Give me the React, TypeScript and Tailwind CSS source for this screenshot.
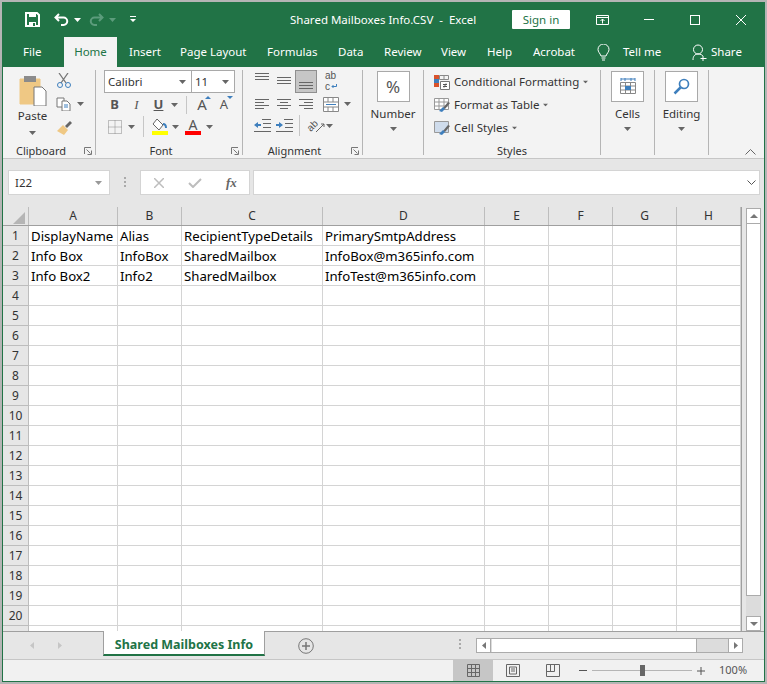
import React from 'react';

const FONT = "font-['Noto_Sans','Open_Sans',sans-serif]";

const colWidths = [89, 64, 141, 162, 64, 64, 64, 64];
const colNames = ['A', 'B', 'C', 'D', 'E', 'F', 'G', 'H'];

const rows: Record<number, string[]> = {
  1: ['DisplayName', 'Alias', 'RecipientTypeDetails', 'PrimarySmtpAddress'],
  2: ['Info Box', 'InfoBox', 'SharedMailbox', 'InfoBox@m365info.com'],
  3: ['Info Box2', 'Info2', 'SharedMailbox', 'InfoTest@m365info.com'],
};

const Caret = ({ className = '' }: { className?: string }) => (
  <svg width="7" height="4" viewBox="0 0 7 4" className={className}>
    <path d="M0 0h7L3.5 4z" fill="#666" />
  </svg>
);

const Launcher = () => (
  <svg width="8" height="8" viewBox="0 0 8 8" className="absolute right-[3px] bottom-0">
    <path d="M.5 7V.5H7M2.5 2.5l4 4M7.5 3.5v4h-4" fill="none" stroke="#777" />
  </svg>
);

const Group = ({ w, label, launcher, children }: { w: string; label?: string; launcher?: boolean; children: React.ReactNode }) => (
  <div className={`relative flex flex-col h-[85px] border-r border-[#b5b5b5] ${w}`}>
    <div className="flex-1 min-h-0">{children}</div>
    {label && (
      <div className={`-mb-[4px] h-[16px] text-center text-[11px] leading-[16px] text-[#333] ${launcher ? 'pr-[16px]' : ''}`}>
        {label}
      </div>
    )}
    {launcher && <Launcher />}
  </div>
);

const Lines = () => (
  <svg width="16" height="9" viewBox="0 0 16 9">
    <rect x="1" y="0" width="14" height="1" fill="#666" />
    <rect x="1" y="3" width="14" height="1" fill="#666" />
    <rect x="1" y="6" width="14" height="1" fill="#666" />
  </svg>
);

const AlignLines = ({ kind }: { kind: 'left' | 'center' | 'right' }) => {
  const xs = kind === 'left' ? [[1, 14], [1, 9], [1, 14], [1, 9]] : kind === 'center' ? [[1, 14], [4, 8], [1, 14], [4, 8]] : [[1, 14], [6, 9], [1, 14], [6, 9]];
  return (
    <svg width="16" height="11" viewBox="0 0 16 11">
      {xs.map(([x, w], i) => <rect key={i} x={x} y={i * 3} width={w} height="1" fill="#666" />)}
    </svg>
  );
};

const TitleBar = () => (
  <div className="flex h-[35px] items-center text-white">
    <svg width="15" height="15" viewBox="0 0 15 15" className="ml-[22px]">
      <path d="M1 1h11l2 2v11H1z" fill="none" stroke="#fff" strokeWidth="2" />
      <path d="M4 1h7v4H4zM4 10h7v4H4z" fill="#fff" />
      <rect x="8" y="11" width="2" height="3" fill="#217346" />
    </svg>
    <svg width="15" height="13" viewBox="0 0 15 13" className="ml-[14px]">
      <path d="M5 1L1.5 4.500 5 8M2 4.500h7.500a3.500 3.500 0 010 7.500H7" fill="none" stroke="#fff" strokeWidth="2" />
    </svg>
    <Caret className="ml-[5px] [&_path]:fill-white" />
    <svg width="15" height="13" viewBox="0 0 15 13" className="ml-[8px]">
      <path d="M10 1l3.500 3.500L10 8M13 4.500H5.500a3.500 3.500 0 000 7.500H8" fill="none" stroke="#5c9c7c" strokeWidth="2" />
    </svg>
    <Caret className="ml-[5px] [&_path]:fill-[#5c9c7c]" />
    <svg width="6" height="7" viewBox="0 0 6 7" className="ml-[14px]">
      <path d="M0 0h6v1H0zM0 3h6L3 6z" fill="#fff" />
    </svg>
    <div className="ml-[154px] w-[186px] whitespace-pre text-[11.5px]">Shared Mailboxes Info.CSV  -  Excel</div>
    <div className="ml-[36px] flex h-[19px] w-[58px] items-center justify-center rounded-[1px] bg-white text-[11.5px] text-[#217346]">Sign in</div>
    <svg width="13" height="10" viewBox="0 0 13 10" className="ml-[26px]">
      <path d="M.5.5h12v9H.5zM.5 2.500h12M6.500 8.500V4M4.500 6l2-2 2 2" fill="none" stroke="#fff" />
    </svg>
    <div className="ml-[35px] h-px w-[10px] bg-white" />
    <div className="ml-[36px] h-[10px] w-[10px] border border-white" />
    <svg width="10" height="10" viewBox="0 0 10 10" className="ml-[36px]">
      <path d="M0 0l10 10M10 0L0 10" stroke="#fff" />
    </svg>
  </div>
);

const tabs: [string, string][] = [
  ['Insert', 'ml-[12px] w-[29px]'],
  ['Page Layout', 'ml-[22px] w-[65px]'],
  ['Formulas', 'ml-[22px] w-[49px]'],
  ['Data', 'ml-[22px] w-[24px]'],
  ['Review', 'ml-[22px] w-[36px]'],
  ['View', 'ml-[21px] w-[25px]'],
  ['Help', 'ml-[21px] w-[24px]'],
  ['Acrobat', 'ml-[22px] w-[42px]'],
];

const TabsRow = () => (
  <div className="flex h-[30px] items-center whitespace-nowrap text-[11.5px] text-white">
    <span className="ml-[20px] w-[41px]">File</span>
    <div className="flex h-full w-[53px] items-center justify-center bg-[#f3f3f3] text-[#217346]">Home</div>
    {tabs.map(([t, m]) => <span key={t} className={m}>{t}</span>)}
    <svg width="13" height="17" viewBox="0 0 13 17" className="ml-[22px]">
      <path d="M4 12C3 9 1 8 1 5.500a5.500 5.500 0 0111 0C12 8 10 9 9 12zM4.500 14h4M5 16h3" fill="none" stroke="#fff" />
    </svg>
    <span className="ml-[13px] w-[38px]">Tell me</span>
    <svg width="15" height="17" viewBox="0 0 15 17" className="ml-[31px]">
      <path d="M1 16c0-4 2-6 5-6s4 1 5 2M6 10a4 4 0 100-9 4 4 0 000 9zM11 12v5M8.500 14.500h6" fill="none" stroke="#fff" />
    </svg>
    <span className="ml-[4px]">Share</span>
  </div>
);

const BigButton = ({ label, children }: { label: string; children: React.ReactNode }) => (
  <div className="flex w-full flex-col items-center pt-[1px]">
    <div className="flex h-[31px] w-[33px] items-center justify-center border border-[#a9a9a9] bg-white">{children}</div>
    <div className="mt-[3px] text-[11.5px] leading-[17px] text-[#333]">{label}</div>
    <Caret className="mt-[5px]" />
  </div>
);

const Clipboard = () => (
  <Group w="w-[93px]" label="Clipboard" launcher>
    <div className="flex">
      <div className="ml-[14px] flex w-[31px] flex-col items-center pt-[5px]">
        <svg width="28" height="31" viewBox="0 0 28 31">
          <path d="M1 4h20v25H1z" fill="#efc884" stroke="#efc884" />
          <rect x="5" y="1" width="12" height="6" fill="#8b8b8b" />
          <path d="M15 12h8l4 4v15H15z" fill="#fff" stroke="#777" />
        </svg>
        <div className="mt-[2px] text-[11.5px] leading-[16px] text-[#333]">Paste</div>
        <Caret className="mt-[7px]" />
      </div>
      <div className="ml-[8px] flex flex-col pt-[3px]">
        <svg width="16" height="15" viewBox="0 0 16 15">
          <path d="M3 0l7 10M12 0L5 10" stroke="#777" fill="none" strokeWidth="1.300" />
          <circle cx="4" cy="12" r="2.500" fill="none" stroke="#3e7fbd" />
          <circle cx="12" cy="12" r="2.500" fill="none" stroke="#3e7fbd" />
        </svg>
        <div className="mt-[9px] flex items-center">
          <svg width="16" height="14" viewBox="0 0 16 14">
            <path d="M1 1h7v9H1z" fill="#fff" stroke="#777" />
            <path d="M6 4h5l3 3v7H6z" fill="#fff" stroke="#777" />
            <path d="M8 8h4M8 10h4" stroke="#3e7fbd" />
          </svg>
          <Caret className="ml-[5px]" />
        </div>
        <svg width="17" height="16" viewBox="0 0 17 16" className="mt-[9px]">
          <path d="M1 11l6-6 5 5-4 5z" fill="#efc884" />
          <path d="M9 6l5-5 2 2-5 5z" fill="#666" />
        </svg>
      </div>
    </div>
  </Group>
);

const FontA = ({ up }: { up: boolean }) => (
  <div className="relative flex w-[18px] justify-center">
    <span className={`${up ? 'text-[15px]' : 'text-[13px]'} leading-[17px] text-[#555]`}>A</span>
    <svg width="6" height="3" viewBox="0 0 6 3" className="absolute right-0 top-0">
      <path d={up ? 'M0 3h6L3 0z' : 'M0 0h6L3 3z'} fill="#3e7fbd" />
    </svg>
  </div>
);

const FontGroup = () => (
  <Group w="w-[147px]" label="Font" launcher>
    <div className="pl-[8px]">
      <div className="flex h-[23px]">
        <div className="flex w-[88px] items-center justify-between border border-[#a9a9a9] bg-white pl-[3px] pr-[5px] text-[11.5px] text-[#333]">
          <span>Calibri</span>
          <Caret />
        </div>
        <div className="flex w-[43px] items-center justify-between border border-l-0 border-[#a9a9a9] bg-white pl-[3px] pr-[5px] text-[11.5px] text-[#333]">
          <span>11</span>
          <Caret />
        </div>
      </div>
      <div className="mt-[1px] flex h-[21px] items-center text-[13px] text-[#555]">
        <span className="ml-[1px] w-[19px] text-center font-bold">B</span>
        <span className="ml-[3px] w-[19px] text-center font-['Liberation_Serif',serif] italic">I</span>
        <span className="ml-[3px] w-[19px] text-center font-bold underline">U</span>
        <Caret className="ml-[3px]" />
        <div className="ml-[8px] h-[18px] w-px bg-[#c6c6c6]" />
        <div className="ml-[6px]"><FontA up /></div>
        <div className="ml-[4px]"><FontA up={false} /></div>
      </div>
      <div className="mt-[1px] flex h-[21px] items-center">
        <svg width="14" height="14" viewBox="0 0 14 14" className="ml-[4px]">
          <path d="M.5.5h13v13H.5zM7 .5v13M.5 7h13" fill="none" stroke="#888" strokeDasharray="1 1" />
        </svg>
        <Caret className="ml-[6px]" />
        <div className="ml-[8px] h-[21px] w-px bg-[#c6c6c6]" />
        <div className="ml-[7px] flex w-[17px] flex-col items-center">
          <svg width="15" height="13" viewBox="0 0 15 13">
            <path d="M5 1l6 6-4 5-6-6z" fill="#fff" stroke="#666" />
            <path d="M11 6c2 0 3 1 3 4" fill="none" stroke="#3e7fbd" strokeWidth="2" />
          </svg>
          <div className="h-[4px] w-[16px] bg-[#ffff00]" />
        </div>
        <Caret className="ml-[4px]" />
        <div className="ml-[6px] flex w-[16px] flex-col items-center">
          <span className="h-[13px] text-[14px] leading-[13px] text-[#555]">A</span>
          <div className="h-[4px] w-[16px] bg-[#ff0000]" />
        </div>
        <Caret className="ml-[5px]" />
      </div>
    </div>
  </Group>
);

const AlignmentGroup = () => (
  <Group w="w-[120px]" label="Alignment" launcher>
    <div className="pl-[11px]">
      <div className="flex h-[23px]">
        <div className="pt-[3px]"><Lines /></div>
        <div className="ml-[6px] pt-[7px]"><Lines /></div>
        <div className="ml-[3px] flex w-[22px] items-end justify-center border border-[#8f8f8f] bg-[#c6c6c6] pb-[1px]"><Lines /></div>
        <div className="ml-[8px] flex flex-col font-['Liberation_Sans',sans-serif] text-[10px] leading-[11px] text-[#555]">
          <span>ab</span>
          <div className="flex items-center">
            <span>c</span>
            <svg width="6" height="5" viewBox="0 0 6 5" className="ml-[1px]">
              <path d="M5.500 0v2.500H1M2.500 1L1 2.500 2.500 4" fill="none" stroke="#3e7fbd" />
            </svg>
          </div>
        </div>
      </div>
      <div className="mt-[3px] flex h-[16px] items-center">
        <AlignLines kind="left" />
        <div className="ml-[6px]"><AlignLines kind="center" /></div>
        <div className="ml-[6px]"><AlignLines kind="right" /></div>
        <svg width="16" height="15" viewBox="0 0 16 15" className="ml-[9px]">
          <path d="M.5.5h15v14H.5zM.5 5h15M.5 10h15M5 .5V5M10 .5V5M5 10v4.500M10 10v4.500" fill="#fff" stroke="#888" />
          <path d="M3 7.500h10" stroke="#3e7fbd" />
        </svg>
        <Caret className="ml-[5px]" />
      </div>
      <div className="mt-[3px] flex h-[21px] items-center">
        <svg width="17" height="13" viewBox="0 0 17 13">
          <path d="M8 .5h9M9 4.500h8M9 8.500h8M0 12.500h17" stroke="#666" />
          <path d="M0 6l4-3v2h3v2H4v2z" fill="#3e7fbd" />
        </svg>
        <svg width="17" height="13" viewBox="0 0 17 13" className="ml-[5px]">
          <path d="M8 .5h9M9 4.500h8M9 8.500h8M0 12.500h17" stroke="#666" />
          <path d="M7 6L3 3v2H0v2h3v2z" fill="#3e7fbd" />
        </svg>
        <div className="ml-[6px] h-[21px] w-px bg-[#c6c6c6]" />
        <div className="relative ml-[7px] flex h-[16px] w-[18px] items-center">
          <span className="-rotate-45 font-['Liberation_Sans',sans-serif] text-[10px] leading-[10px] text-[#555]">ab</span>
          <svg width="18" height="16" viewBox="0 0 18 16" className="absolute inset-0">
            <path d="M9 14l8-8M14 6h3v3" fill="none" stroke="#666" />
          </svg>
        </div>
        <Caret className="ml-[1px]" />
      </div>
    </div>
  </Group>
);

const StyleRow = ({ label, kind }: { label: string; kind: 'cond' | 'table' | 'cell' }) => (
  <div className="flex h-[23px] items-center whitespace-nowrap">
    {kind === 'cond' ? (
      <svg width="16" height="16" viewBox="0 0 16 16">
        <path d="M0 1h5v4H0z" fill="#d9532c" />
        <path d="M0 5h5v4H0z" fill="#3e7fbd" />
        <path d="M0 9h5v4H0z" fill="#d9532c" />
        <path d="M5.500 1.500h9v4h-9zM10 1.500v4" fill="none" stroke="#888" />
        <path d="M6.500 7.500h9v8h-9z" fill="#fff" stroke="#777" />
        <path d="M9 10.500h4M9 12.500h4M12 9.500l-2 4" stroke="#555" fill="none" />
      </svg>
    ) : (
      <svg width="16" height="16" viewBox="0 0 16 16">
        <path d={kind === 'table' ? 'M.5 1.500h14v11H.5zM.5 5h14M.5 9h14M5 1.500v11M10 1.500v11' : 'M.5 1.500h14v11H.5z'} fill={kind === 'table' ? '#fff' : '#cfdcec'} stroke="#999" />
        <path d="M9 11l5-6 2 1-5 6z" fill="#666" />
        <path d="M5 14l4-4 2 2-3 3z" fill="#3e7fbd" />
      </svg>
    )}
    <span className="ml-[4px] text-[11.5px] text-[#333]">{label}</span>
    <Caret className="ml-[3px] scale-75" />
  </div>
);

const Ribbon = () => (
  <div className="flex h-[92px] border-b border-[#c6c6c6] bg-[#f3f3f3] pt-[3px]">
    <Clipboard />
    <FontGroup />
    <AlignmentGroup />
    <Group w="w-[61px]">
      <BigButton label="Number">
        <span className="text-[17px] text-[#555]">%</span>
      </BigButton>
    </Group>
    <Group w="w-[177px]" label="Styles">
      <div className="pl-[10px]">
        <StyleRow label="Conditional Formatting" kind="cond" />
        <StyleRow label="Format as Table" kind="table" />
        <StyleRow label="Cell Styles" kind="cell" />
      </div>
    </Group>
    <Group w="w-[54px]">
      <BigButton label="Cells">
        <svg width="16" height="18" viewBox="0 0 16 18">
          <path d="M1 1h14M1 0v3M15 0v3M5 0v3M11 0v3" stroke="#3e7fbd" fill="none" />
          <path d="M.5 4.500h15v11H.5zM.5 8h15M.5 12h15M5.500 4.500v11M10.500 4.500v11" fill="#fff" stroke="#888" />
          <rect x="5" y="8" width="6" height="4" fill="#3e7fbd" />
        </svg>
      </BigButton>
    </Group>
    <Group w="w-[54px]">
      <BigButton label="Editing">
        <svg width="17" height="17" viewBox="0 0 17 17">
          <circle cx="11" cy="6" r="4.500" fill="none" stroke="#3e7fbd" strokeWidth="1.700" />
          <path d="M7.500 9.500L1.500 15.500" stroke="#3e7fbd" strokeWidth="2.500" />
        </svg>
      </BigButton>
    </Group>
    <div className="flex h-[85px] flex-1 items-end justify-end pr-[8px]">
      <svg width="11" height="6" viewBox="0 0 11 6">
        <path d="M.5 5.500l5-5 5 5" fill="none" stroke="#666" />
      </svg>
    </div>
  </div>
);

const Grip = ({ className = '' }: { className?: string }) => (
  <div className={`mt-[7px] flex w-[3px] flex-col gap-[2px] ${className}`}>
    <div className="h-[2px] w-[2px] bg-[#aaa]" />
    <div className="h-[2px] w-[2px] bg-[#aaa]" />
    <div className="h-[2px] w-[2px] bg-[#aaa]" />
  </div>
);

const FormulaBar = () => (
  <div className="flex h-[48px] items-start bg-[#e6e6e6] pt-[11px]">
    <div className="ml-[5px] flex h-[25px] w-[102px] items-center justify-between border border-[#d4d4d4] bg-white pl-[6px] pr-[7px] text-[11.5px] text-[#333]">
      <span>I22</span>
      <Caret className="[&_path]:fill-[#999]" />
    </div>
    <Grip className="ml-[14px]" />
    <div className="ml-[13px] flex h-[25px] w-[110px] items-center border border-[#d4d4d4] bg-white">
      <svg width="10" height="10" viewBox="0 0 10 10" className="ml-[13px]">
        <path d="M0 0l10 10M10 0L0 10" stroke="#bdbdbd" strokeWidth="1.500" />
      </svg>
      <svg width="14" height="10" viewBox="0 0 14 10" className="ml-[24px]">
        <path d="M1 5l4 4 8-8" fill="none" stroke="#bdbdbd" strokeWidth="2" />
      </svg>
      <span className="ml-[24px] font-['Liberation_Serif',serif] text-[13px] font-bold italic text-[#666]">fx</span>
    </div>
    <div className="ml-[3px] flex h-[25px] w-[507px] items-center justify-end border border-[#d4d4d4] bg-white pr-[3px]">
      <svg width="9" height="5" viewBox="0 0 9 5">
        <path d="M.5.5l4 4 4-4" fill="none" stroke="#555" />
      </svg>
    </div>
  </div>
);

const SheetGrid = () => {
  const rowNums = Array.from({ length: 20 }, (_, i) => i + 1);
  return (
    <div className="flex h-[424px] bg-[#e6e6e6]">
      <div className="w-[739px] overflow-hidden border-r border-[#9f9f9f]">
        <div className="flex h-[19px] border-b border-[#9f9f9f]">
          <div className="relative w-[26px] border-r border-[#bdbdbd]">
            <svg width="12" height="12" viewBox="0 0 12 12" className="absolute right-[3px] bottom-[1px]">
              <path d="M12 0v12H0z" fill="#b5b5b5" />
            </svg>
          </div>
          {colNames.map((c, i) => (
            <div
              key={c}
              style={{ width: colWidths[i] }}
              className="flex items-center justify-center border-r border-[#bdbdbd] text-[12px] text-[#333]"
            >
              {c}
            </div>
          ))}
        </div>
        <div>
          {rowNums.map((n) => (
            <div key={n} className="flex h-[20px]">
              <div className="flex w-[26px] items-center justify-center border-r border-b border-[#bdbdbd] pt-[1px] text-[12px] text-[#333]">{n}</div>
              {colNames.map((c, i) => (
                <div
                  key={c}
                  style={{ width: colWidths[i] }}
                  className="flex items-center whitespace-nowrap border-r border-b border-[#d4d4d4] bg-white pl-[2px] pt-[2px] text-[13.2px] text-black"
                >
                  {rows[n]?.[i]}
                </div>
              ))}
            </div>
          ))}
          <div className="flex h-[5px]">
            <div className="w-[26px] border-r border-[#bdbdbd]" />
            {colNames.map((c, i) => (
              <div key={c} style={{ width: colWidths[i] }} className="border-r border-[#d4d4d4] bg-white" />
            ))}
          </div>
        </div>
      </div>
      <div className="ml-[4px] flex w-[15px] flex-col pt-[1px]">
        <div className="flex h-[16px] items-center justify-center border border-[#ababab] bg-white">
          <svg width="8" height="4" viewBox="0 0 8 4"><path d="M0 4h8L4 0z" fill="#777" /></svg>
        </div>
        <div className="h-[372px] border-x border-b border-[#ababab] bg-white" />
        <div className="flex-1 bg-[#dcdcdc]" />
        <div className="flex h-[15px] items-center justify-center border border-[#ababab] bg-white">
          <svg width="8" height="4" viewBox="0 0 8 4"><path d="M0 0h8L4 4z" fill="#777" /></svg>
        </div>
      </div>
    </div>
  );
};

const SheetTabs = () => (
  <div className="flex h-[29px] border-b border-t border-b-[#c6c6c6] border-t-[#9f9f9f] bg-[#e6e6e6]">
    <svg width="4" height="7" viewBox="0 0 4 7" className="ml-[27px] mt-[10px]"><path d="M4 0v7L0 3.500z" fill="#c6c6c6" /></svg>
    <svg width="4" height="7" viewBox="0 0 4 7" className="ml-[24px] mt-[10px]"><path d="M0 0v7l4-3.500z" fill="#c6c6c6" /></svg>
    <div className="ml-[41px] -mt-px flex h-[25px] w-[162px] items-center justify-center border-x border-b-2 border-x-[#9f9f9f] border-b-[#217346] bg-white pt-[5px] text-[12.5px] font-bold text-[#217346]">
      Shared Mailboxes Info
    </div>
    <svg width="16" height="16" viewBox="0 0 16 16" className="ml-[33px] mt-[6px]">
      <circle cx="8" cy="8" r="7.300" fill="none" stroke="#777" />
      <path d="M8 4v8M4 8h8" stroke="#777" strokeWidth="1.500" />
    </svg>
    <Grip className="ml-[145px]" />
    <div className="ml-[14px] mt-[6px] flex h-[15px] w-[267px] border border-[#ababab] bg-[#dcdcdc]">
      <div className="flex w-[14px] items-center justify-center border-r border-[#ababab] bg-white">
        <svg width="4" height="7" viewBox="0 0 4 7"><path d="M4 0v7L0 3.500z" fill="#777" /></svg>
      </div>
      <div className="ml-px w-[205px] border-r border-[#ababab] bg-white" />
      <div className="ml-auto flex w-[14px] items-center justify-center border-l border-[#ababab] bg-white">
        <svg width="4" height="7" viewBox="0 0 4 7"><path d="M0 0v7l4-3.500z" fill="#777" /></svg>
      </div>
    </div>
  </div>
);

const StatusBar = () => (
  <div className="flex h-[21px] items-center bg-[#f1f1f1] text-[#555]">
    <div className="ml-[450px] flex h-full w-[40px] items-center justify-center bg-[#c6c6c6]">
      <svg width="13" height="13" viewBox="0 0 13 13">
        <path d="M.5.5h12v12H.5zM4.500.5v12M8.500.5v12M.5 4.500h12M.5 8.500h12" fill="none" stroke="#666" />
      </svg>
    </div>
    <svg width="14" height="13" viewBox="0 0 14 13" className="ml-[13px]">
      <path d="M.5.5h13v12H.5z" fill="none" stroke="#666" />
      <path d="M3.500 3h7v7h-7zM5 5h4M5 7h4" fill="none" stroke="#666" />
    </svg>
    <svg width="14" height="13" viewBox="0 0 14 13" className="ml-[26px]">
      <path d="M.5.500h13v12H.5zM.5 7.500h8v-7M4.500.5v7" fill="none" stroke="#666" />
    </svg>
    <div className="ml-[19px] h-px w-[8px] bg-[#555]" />
    <div className="relative ml-[5px] h-px w-[100px] bg-[#b5b5b5]">
      <div className="absolute left-[48px] top-[-5px] h-[11px] w-[5px] bg-[#666]" />
    </div>
    <svg width="8" height="8" viewBox="0 0 8 8" className="ml-[5px]">
      <path d="M4 0v8M0 4h8" stroke="#555" />
    </svg>
    <span className="ml-[14px] text-[11px]">100%</span>
  </div>
);

export default function App() {
  return (
    <div className={`h-[684px] w-[767px] overflow-hidden bg-[#b5b5b5] p-[2px] ${FONT}`}>
      <div className="h-[680px] border-x border-b border-[#217346] bg-[#217346]">
        <TitleBar />
        <TabsRow />
        <Ribbon />
        <FormulaBar />
        <SheetGrid />
        <SheetTabs />
        <StatusBar />
      </div>
    </div>
  );
}
